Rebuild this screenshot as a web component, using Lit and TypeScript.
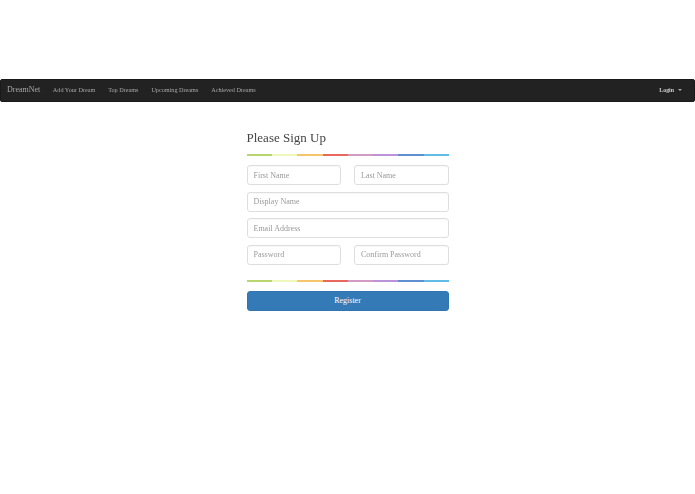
import { LitElement, html, css } from "lit";
import { customElement } from "lit/decorators.js";

@customElement("app-root")
export class AppRoot extends LitElement {
  static styles = css`
    :host { display: block; height: 494px; background: #fff; font-family: "Liberation Serif", "Times New Roman", serif; padding-top: 79px; box-sizing: border-box; overflow: hidden; }
    .nav { filter: blur(0.4px); height: 22.5px; box-sizing: border-box; background: #222; border: 1px solid #1a1a1a; border-radius: 2px; display: flex; align-items: center; padding: 0 12px 1.5px 6px; color: #a8a8a8; font-size: 6.2px; }
    .brand { font-size: 8px; margin-right: 12.5px; }
    .links { display: flex; gap: 12.9px; flex: 1; }
    .login { color: #d0d0d0; font-weight: bold; font-size: 5.9px; display: flex; align-items: center; gap: 4px; }
    .caret { width: 0; height: 0; border-left: 2px solid transparent; border-right: 2px solid transparent; border-top: 2px solid #aaa; }
    .form { filter: blur(0.4px); width: 202px; margin: 28.5px auto 0; display: flex; flex-direction: column; }
    h2 { margin: 0; font-weight: 400; font-size: 13px; line-height: 16px; color: #444; height: 16px; }
    .rainbow { height: 2px; flex: none; background: linear-gradient(to right, #b9d56d 0 12.5%, #f0f7bd 12.5% 25%, #f7c56c 25% 37.5%, #e8685d 37.5% 50%, #d29bc6 50% 62.5%, #bb93d8 62.5% 75%, #5f8fd0 75% 87.5%, #62bde6 87.5% 100%); }
    .top { margin-top: 8px; }
    .fields { display: flex; flex-direction: column; gap: 6.67px; margin-top: 9px; }
    .row { display: flex; gap: 13px; }
    input { display: block; flex: none; width: 100%; height: 20px; box-sizing: border-box; border: 1px solid #dedede; border-radius: 3px; padding: 0 6px; font-family: inherit; font-size: 8px; color: #555; background: #fff; outline: none; box-shadow: inset 0 1px 1px rgba(0,0,0,.03); }
    .row input { flex: 1; width: auto; min-width: 0; }
    input::placeholder { color: #999; opacity: 1; }
    .bottom { margin-top: 15px; }
    button { margin-top: 9px; height: 20px; background: #337ab7; border: 1px solid #3276b1; border-radius: 3px; color: #fff; font-family: inherit; font-size: 8px; padding: 0; }
  `;

  render() {
    return html`
      <nav class="nav">
        <span class="brand">DreamNet</span>
        <div class="links">
          <span>Add Your Dream</span><span>Top Dreams</span><span>Upcoming Dreams</span><span>Achieved Dreams</span>
        </div>
        <span class="login">Login <i class="caret"></i></span>
      </nav>
      <form class="form">
        <h2>Please Sign Up</h2>
        <div class="rainbow top"></div>
        <div class="fields">
          <div class="row"><input placeholder="First Name" /><input placeholder="Last Name" /></div>
          <input placeholder="Display Name" />
          <input placeholder="Email Address" />
          <div class="row"><input placeholder="Password" /><input placeholder="Confirm Password" /></div>
        </div>
        <div class="rainbow bottom"></div>
        <button type="button">Register</button>
      </form>
    `;
  }
}
